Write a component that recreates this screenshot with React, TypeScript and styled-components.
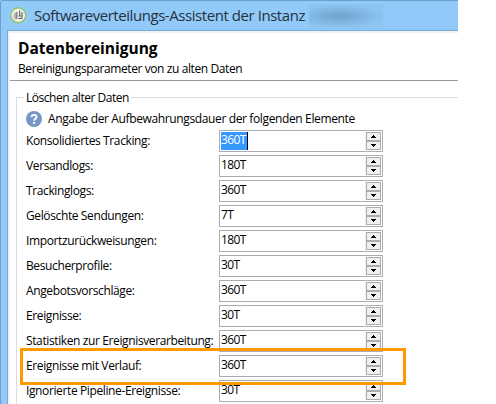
import React from "react";
import styled, { createGlobalStyle } from "styled-components";

const GlobalStyle = createGlobalStyle`
  body { margin: 0; background: #fff; overflow: hidden; }
  * { box-sizing: border-box; }
`;

const Viewport = styled.div`
  width: 496px;
  height: 404px;
  overflow: hidden;
  background: #fff;
  color: #000;
  font: 12px/16px "Open Sans", "Noto Sans", sans-serif;
  white-space: nowrap;
`;

const Window = styled.div`
  width: 458px;
  height: 404px;
  display: flex;
  flex-direction: column;
  background: #91c9f8;
  border-top: 1px solid #6f9fc8;
  border-left: 1px solid #6f9fc8;
  border-top-left-radius: 2px;
`;

const TitleBar = styled.header`
  flex: none;
  height: 29px;
  display: flex;
  align-items: center;
  padding-left: 9px;
`;

const TitleText = styled.span`
  flex: none;
  margin-left: 7px;
  width: 275px;
  font-size: 15px;
  line-height: 26px;
  height: 28px;
  letter-spacing: -0.44px;
  color: #25313c;
`;

const Redaction = styled.span`
  width: 74px;
  height: 25px;
  margin-top: 1px;
  background:
    radial-gradient(ellipse 44px 11px at 30px 12px, rgba(88, 128, 164, 0.5), rgba(100, 145, 185, 0.3) 55%, transparent),
    #8cc4f2;
`;

const Body = styled.main`
  flex: 1;
  min-height: 0;
  margin-left: 6px;
  border-top: 1px solid #73abd9;
  border-left: 1px solid #73abd9;
  padding: 2px 0 0 2px;
  background: #f1f1f1;
`;

const Page = styled.div`
  height: 100%;
  background: #fff;
  display: flex;
  flex-direction: column;
`;

const PageHeader = styled.div`
  flex: none;
  height: 48px;
  padding: 5px 0 0 8px;
  border-bottom: 1px solid #999;
`;

const Heading = styled.h1`
  margin: 0;
  font-size: 15.5px;
  line-height: 20px;
  font-weight: 700;
  letter-spacing: 0;
`;

const Subtitle = styled.p`
  margin: 3px 0 0;
  letter-spacing: -0.4px;
`;

const Group = styled.fieldset`
  flex: 1;
  min-width: 0;
  margin: 8px 0 0 6px;
  padding: 0 0 0 9px;
  border: solid #dcdcdc;
  border-width: 1px 0 0 1px;
`;

const Legend = styled.legend`
  margin-left: -2px;
  padding: 0 2px;
  height: 16px;
  line-height: 18px;
  letter-spacing: -0.48px;
`;

const Hint = styled.div`
  display: flex;
  align-items: center;
  height: 20px;
  margin-top: 4px;
  gap: 6px;
  letter-spacing: -0.37px;
`;

const Rows = styled.div`
  display: grid;
  grid-auto-rows: 22px;
  row-gap: 3px;
  margin-top: 1px;
`;

const Row = styled.div`
  position: relative;
  display: grid;
  grid-template-columns: 193px 164px;
`;

const Label = styled.label`
  line-height: 21px;
  letter-spacing: -0.38px;
`;

const Field = styled.div`
  display: flex;
  justify-content: space-between;
  height: 22px;
  padding: 1px;
  border: 1px solid #abadb3;
  background: #fff;
`;

const Value = styled.span<{ $selected?: boolean }>`
  height: 18px;
  line-height: 16px;
  padding-right: 1px;
  letter-spacing: -0.65px;
  color: ${(p) => (p.$selected ? "#fff" : "#000")};
  background: ${(p) => (p.$selected ? "#3399ff" : "transparent")};
  border-right: 1px solid ${(p) => (p.$selected ? "#000" : "transparent")};
`;

const Spinner = styled.div`
  width: 16px;
  padding-left: 1px;
  display: grid;
  grid-template-rows: 9px 9px;
  background: #f0f0f0;
`;

const SpinButton = styled.button`
  display: flex;
  align-items: center;
  justify-content: center;
  padding: 0;
  border: 1px solid #acacac;
  background: #f0f0f0;
`;

const Highlight = styled.div`
  position: absolute;
  left: -6px;
  top: -7px;
  width: 386px;
  height: 37px;
  border: 3px solid #ff9900;
  z-index: 1;
`;

const AppIcon = () => (
  <svg width="17" height="17" viewBox="0 0 17 17">
    <circle cx="8.3" cy="8.3" r="7.4" fill="#f1f2ef" stroke="#8cbf52" strokeWidth="1.2" />
    <path d="M3.5 7 5.5 5.5v7l-2-1z" fill="#bbb" />
    <path d="M5.5 5.2 7.5 4.7v7L5.5 12.5z" fill="#888" />
    <path d="M9.7 3.5v5.5M12 5v6.5H8.5M8.5 9h3" fill="none" stroke="#555" strokeWidth="1" />
  </svg>
);

const HelpIcon = () => (
  <svg width="16" height="16" viewBox="0 0 16 16">
    <circle cx="8" cy="8" r="8" fill="#7797c7" />
    <path d="M5.6 6.1C5.7 3.2 10.5 3.2 10.5 5.9 10.5 7.7 8.1 7.7 8.1 9.8" fill="none" stroke="#fff" strokeWidth="1.9" />
    <rect x="7.1" y="11" width="2" height="2" fill="#fff" />
  </svg>
);

const Arrow = ({ down }: { down?: boolean }) => (
  <svg width="5" height="3" viewBox="0 0 5 3" shapeRendering="crispEdges">
    <path d={down ? "M0 0H5V1H4V2H3V3H2V2H1V1H0Z" : "M0 3H5V2H4V1H3V0H2V1H1V2H0Z"} />
  </svg>
);

const rows = [
  { label: "Konsolidiertes Tracking:", value: "360T", selected: true },
  { label: "Versandlogs:", value: "180T" },
  { label: "Trackinglogs:", value: "360T" },
  { label: "Gelöschte Sendungen:", value: "7T" },
  { label: "Importzurückweisungen:", value: "180T" },
  { label: "Besucherprofile:", value: "30T" },
  { label: "Angebotsvorschläge:", value: "360T" },
  { label: "Ereignisse:", value: "30T" },
  { label: "Statistiken zur Ereignisverarbeitung:", value: "360T" },
  { label: "Ereignisse mit Verlauf:", value: "360T", highlighted: true },
  { label: "Ignorierte Pipeline-Ereignisse:", value: "30T" },
];

export default function App() {
  return (
    <Viewport>
      <GlobalStyle />
      <Window>
        <TitleBar>
          <AppIcon />
          <TitleText>Softwareverteilungs-Assistent der Instanz</TitleText>
          <Redaction />
        </TitleBar>
        <Body>
          <Page>
            <PageHeader>
              <Heading>Datenbereinigung</Heading>
              <Subtitle>Bereinigungsparameter von zu alten Daten</Subtitle>
            </PageHeader>
            <Group>
              <Legend>Löschen alter Daten</Legend>
              <Hint>
                <HelpIcon />
                <span>Angabe der Aufbewahrungsdauer der folgenden Elemente</span>
              </Hint>
              <Rows>
                {rows.map((r) => (
                  <Row key={r.label}>
                    <Label>{r.label}</Label>
                    <Field>
                      <Value $selected={r.selected}>{r.value}</Value>
                      <Spinner>
                        <SpinButton><Arrow /></SpinButton>
                        <SpinButton><Arrow down /></SpinButton>
                      </Spinner>
                    </Field>
                    {r.highlighted && <Highlight />}
                  </Row>
                ))}
              </Rows>
            </Group>
          </Page>
        </Body>
      </Window>
    </Viewport>
  );
}
